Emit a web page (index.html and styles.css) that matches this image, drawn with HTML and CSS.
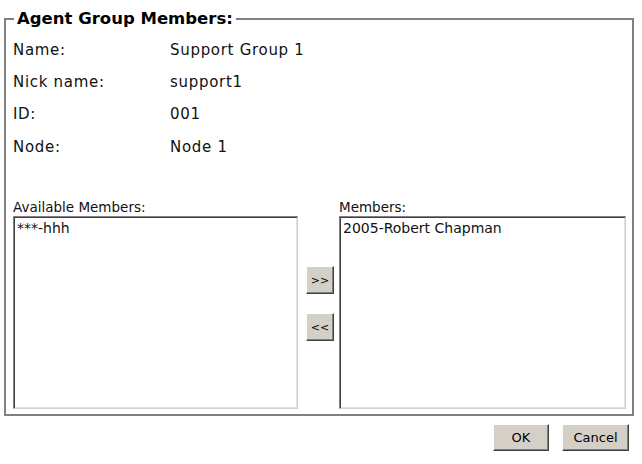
FILE: index.html
```html
<!DOCTYPE html>
<html lang="en">
<head>
  <meta charset="UTF-8" />
  <title>Agent Group Members</title>
  <link rel="stylesheet" href="styles.css">
</head>
<body>
  <div class="page">
    <fieldset class="group">
      <legend>Agent Group Members:</legend>

      <div class="info">
        <div>Name:</div>
        <div>Support Group 1</div>
        <div>Nick name:</div>
        <div>support1</div>
        <div>ID:</div>
        <div>001</div>
        <div>Node:</div>
        <div>Node 1</div>
      </div>

      <div class="members">
        <div class="column available">
          <div class="list-label">Available Members:</div>
          <div class="listbox">
            <div class="item">***-hhh</div>
          </div>
        </div>

        <div class="movers">
          <button class="btn mover">&gt;&gt;</button>
          <button class="btn mover">&lt;&lt;</button>
        </div>

        <div class="column selected">
          <div class="list-label">Members:</div>
          <div class="listbox">
            <div class="item">2005-Robert Chapman</div>
          </div>
        </div>
      </div>
    </fieldset>

    <div class="actions">
      <button class="btn ok">OK</button>
      <button class="btn cancel">Cancel</button>
    </div>
  </div>
</body>
</html>
```

FILE: styles.css
```css
body {
  margin: 0;
  background: #fff;
  color: #111;
  font-family: "DejaVu Sans", Verdana, sans-serif;
}

.page {
  padding: 9px 8px 0 4px;
}

.group {
  margin: 0;
  border: 2px solid #808080;
  padding: 0 6px 5px 7px;
}

.group legend {
  margin-left: 1px;
  padding: 0 3px;
  font-size: 16.5px;
  font-weight: bold;
  line-height: 20px;
  color: #000;
}

.info {
  display: grid;
  grid-template-columns: 157px auto;
  grid-template-rows: 33px 31px 33px 34px;
  align-items: center;
  padding-top: 4px;
  font-size: 15px;
  letter-spacing: 0.7px;
}

.members {
  display: flex;
  margin-top: 35px;
}

.column {
  display: flex;
  flex-direction: column;
}

.available {
  width: 285px;
}

.selected {
  width: 287px;
  margin-left: 5px;
}

.list-label {
  font-size: 13.5px;
  line-height: 17px;
}

.listbox {
  height: 193px;
  box-sizing: border-box;
  background: #fff;
  border: 1px solid;
  border-color: #808080 #d4d0c8 #d4d0c8 #808080;
  box-shadow: inset 1px 1px #404040, inset -1px -1px #e4e2dc;
  padding: 3px 3px;
}

.item {
  font-size: 14px;
  line-height: 16px;
}

.movers {
  display: flex;
  flex-direction: column;
  gap: 19px;
  width: 28px;
  margin: 67px 0 0 8px;
}

.btn {
  box-sizing: border-box;
  background: #d4d0c8;
  border: 1px solid;
  border-color: #fff #404040 #404040 #fff;
  box-shadow: inset -1px -1px #808080;
  border-radius: 0;
  padding: 0;
  color: #000;
  font-family: "DejaVu Sans", Verdana, sans-serif;
}

.mover {
  width: 28px;
  height: 28px;
  font-size: 11px;
}

.actions {
  display: flex;
  justify-content: flex-end;
  gap: 13px;
  margin-top: 8px;
  padding-right: 5px;
}

.ok,
.cancel {
  height: 27px;
  font-size: 13px;
}

.ok {
  width: 56px;
}

.cancel {
  width: 67px;
}
```
